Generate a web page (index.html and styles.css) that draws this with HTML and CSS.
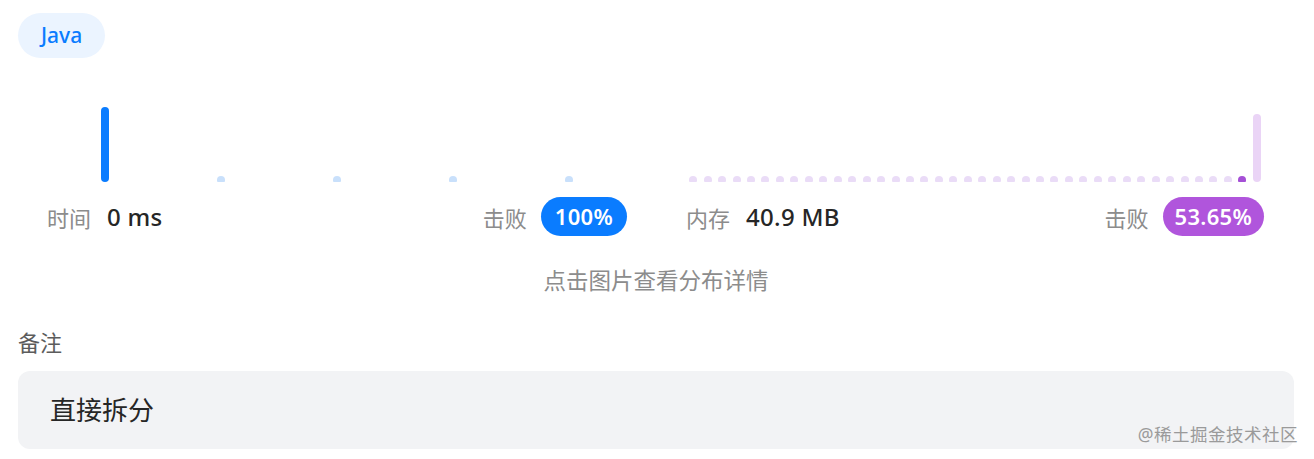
FILE: index.html
```html
<!DOCTYPE html>
<html lang="zh-CN">

<head>
    <meta charset="UTF-8">
    <title>提交详情</title>
    <link rel="stylesheet" href="styles.css">
</head>

<body>
    <div class="lang">Java</div>

    <section class="stats">
        <div class="stat">
            <div class="chart blue five">
                <i class="peak" style="height: 75px"></i>
                <i></i>
                <i></i>
                <i></i>
                <i></i>
            </div>
            <div class="row">
                <span class="label">时间</span>
                <span class="value">0 ms</span>
                <span class="beat">击败</span>
                <span class="badge">100%</span>
            </div>
        </div>

        <div class="stat">
            <div class="chart purple forty">
                <i></i><i></i><i></i><i></i><i></i><i></i><i></i><i></i><i></i><i></i>
                <i></i><i></i><i></i><i></i><i></i><i></i><i></i><i></i><i></i><i></i>
                <i></i><i></i><i></i><i></i><i></i><i></i><i></i><i></i><i></i><i></i>
                <i></i><i></i><i></i><i></i><i></i><i></i><i></i><i></i>
                <i class="mine"></i>
                <i class="peak" style="height: 68px"></i>
            </div>
            <div class="row">
                <span class="label">内存</span>
                <span class="value">40.9 MB</span>
                <span class="beat">击败</span>
                <span class="badge">53.65%</span>
            </div>
        </div>
    </section>

    <p class="hint">点击图片查看分布详情</p>

    <h3 class="note-title">备注</h3>
    <div class="note">直接拆分</div>

    <span class="mark">@稀土掘金技术社区</span>
</body>

</html>
```

FILE: styles.css
```css
body {
    margin: 0;
    padding: 13px 20px 0 18px;
    font-family: "Noto Sans", "Noto Sans CJK SC", sans-serif;
    background: #fff;
    color: #262626;
}

.lang {
    display: inline-block;
    height: 45px;
    line-height: 45px;
    padding: 0 23px;
    border-radius: 23px;
    background: #ebf4ff;
    color: #0a7cff;
    font-size: 21px;
    font-weight: 500;
}

.stats {
    display: grid;
    grid-template-columns: 580px 578px;
    column-gap: 59px;
    margin-left: 29px;
}

.chart {
    display: grid;
    height: 124px;
    align-items: end;
    justify-items: center;
}

.five {
    grid-template-columns: repeat(5, 1fr);
}

.forty {
    grid-template-columns: repeat(40, 1fr);
}

.chart i {
    display: block;
    width: 8px;
    height: 6px;
    border-radius: 4px 4px 1px 1px;
}

.chart .peak {
    border-radius: 4px;
}

.blue i {
    background: #c9e0fb;
}

.blue .peak {
    background: #0a7cff;
}

.purple i {
    background: #eadcf7;
}

.purple .peak {
    background: #ead4f6;
}

.purple .mine {
    background: #a54fd6;
}

.row {
    display: flex;
    align-items: center;
    height: 39px;
    margin-top: 15px;
    font-size: 22px;
}

.label {
    color: #8c8c8c;
    margin-right: 16px;
}

.value {
    font-weight: 500;
    font-size: 24px;
    letter-spacing: 0.3px;
    color: #262626;
}

.beat {
    margin-left: auto;
    margin-right: 14px;
    color: #8c8c8c;
}

.badge {
    height: 39px;
    line-height: 39px;
    padding: 0 14px;
    border-radius: 20px;
    background: #0a7cff;
    color: #fff;
    font-weight: 600;
    font-size: 22px;
    letter-spacing: 0.3px;
}

.purple + .row .badge {
    background: #b055dc;
    padding: 0 12px;
}

.hint {
    margin: 30px 0 0;
    text-align: center;
    color: #8c8c8c;
    font-size: 22.5px;
    line-height: 30px;
}

.note-title {
    margin: 31px 0 0;
    font-size: 22px;
    font-weight: 400;
    line-height: 30px;
    color: #5c5c5c;
}

.note {
    margin-top: 14px;
    height: 78px;
    line-height: 78px;
    padding-left: 32px;
    border-radius: 12px;
    background: #f2f3f5;
    font-size: 26px;
    color: #262626;
}

.mark {
    position: absolute;
    right: 16px;
    top: 421px;
    font-size: 17.5px;
    color: #9a9a9a;
    letter-spacing: 0.5px;
}
```
